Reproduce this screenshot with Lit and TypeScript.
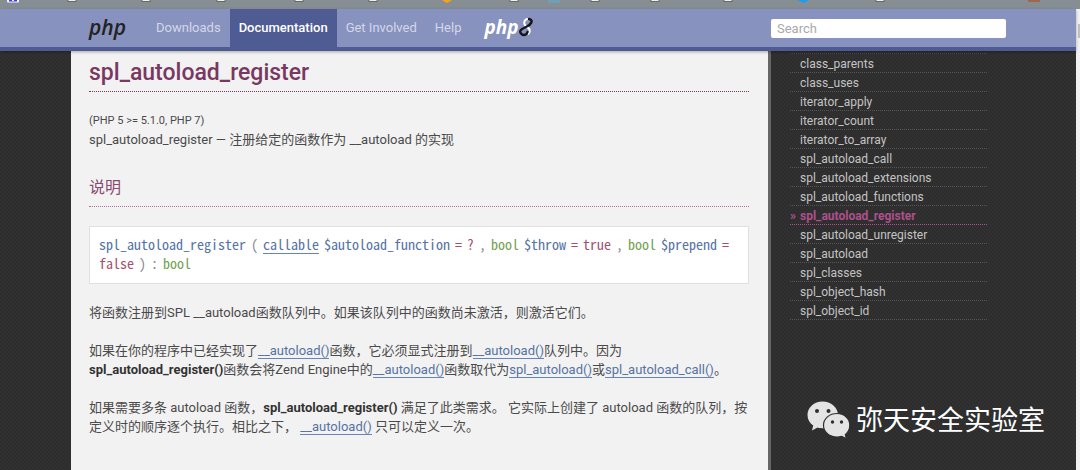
import { LitElement, html, svg, css } from "lit";
import { customElement } from "lit/decorators.js";

const TABS = [
  { left: 72, kind: "page" },
  { left: 146, kind: "page" },
  { left: 221, kind: "page" },
  { left: 299, kind: "page" },
  { left: 373, kind: "page" },
  { left: 447, kind: "orange" },
  { left: 514, kind: "page" },
  { left: 554, kind: "teal" },
  { left: 595, kind: "page" },
  { left: 655, kind: "page" },
  { left: 728, kind: "page" },
  { left: 803, kind: "blue" },
  { left: 880, kind: "page" },
  { left: 1034, kind: "brown" },
];

const FUNCTIONS = [
  "class_parents",
  "class_uses",
  "iterator_apply",
  "iterator_count",
  "iterator_to_array",
  "spl_autoload_call",
  "spl_autoload_extensions",
  "spl_autoload_functions",
  "spl_autoload_register",
  "spl_autoload_unregister",
  "spl_autoload",
  "spl_classes",
  "spl_object_hash",
  "spl_object_id",
];

const CURRENT = "spl_autoload_register";

@customElement("browser-strip")
class BrowserStrip extends LitElement {
  static styles = css`
    :host {
      display: block;
      background: #868e94;
      border-bottom: 1px solid #8a8f9c;
    }
    .icons {
      display: block;
      width: 100%;
      height: 8px;
    }
  `;

  private icon(tab: { left: number; kind: string }) {
    const x = tab.left;
    switch (tab.kind) {
      case "orange":
        return svg`<path d="M${x - 5} 0h10l-3 2-2 1-2-1z" fill="#f5a11a"/>`;
      case "teal":
        return svg`<rect x=${x - 6} y="-2" width="12" height="5" rx="1" fill="#6f9fb4"/>`;
      case "blue":
        return svg`<path d="M${x - 6} 0h12l-5 3z" fill="#1e9cf5"/>`;
      case "brown":
        return svg`<rect x=${x - 6} y="-2" width="12" height="4" fill="#9a6a4a"/>`;
      default:
        return svg`<rect x=${x - 4} y="-3" width="8" height="4.500" fill="#eef0ea" stroke="#666a66"/>`;
    }
  }

  render() {
    return html`<svg class="icons" aria-hidden="true">
      <rect x="7" y="-4" width="12" height="6.500" rx="1" fill="#f4f4ff" />
      <path d="M9 0h3v1h2v-1h3v1.500h-8z" fill="#3a3af0" />
      ${TABS.map((t) => this.icon(t))}
    </svg>`;
  }
}

@customElement("site-nav")
class SiteNav extends LitElement {
  static styles = css`
    :host {
      display: block;
      background: #8892bf;
      border-bottom: 4px solid #4f5b93;
      box-shadow: 0 1px 3px rgba(0, 0, 0, 0.3);
      position: relative;
    }
    .bar {
      display: flex;
      align-items: stretch;
      height: 38px;
      padding-left: 80px;
      padding-right: 70px;
    }
    a {
      display: flex;
      align-items: center;
      padding: 0 9px 2px;
      font-size: 13px;
      line-height: 19px;
      color: #d3d7e9;
      text-decoration: none;
      white-space: nowrap;
    }
    .logo {
      font: italic 600 21px/24px "Open Sans", sans-serif;
      color: #222;
      margin-right: 12px;
    }
    .current {
      background: #4f5b93;
      color: #fff;
      font-weight: 500;
    }
    .eight {
      font: italic 700 19px/24px "Open Sans", sans-serif;
      color: #fff;
      padding-left: 14px;
    }
    .swirl {
      width: 14px;
      height: 20px;
    }
    .search {
      margin-left: auto;
      display: flex;
      align-items: center;
    }
    input {
      width: 235px;
      height: 19px;
      box-sizing: border-box;
      border: 0;
      border-radius: 2px;
      padding: 0 6px;
      background: #fff;
      font: 13px/19px Roboto, sans-serif;
      color: #333;
    }
    input::placeholder {
      color: #a9a9a9;
      opacity: 1;
    }
  `;

  render() {
    return html`<nav class="bar">
      <a class="logo" href="#">php</a>
      <a href="#">Downloads</a>
      <a class="current" href="#" aria-current="page">Documentation</a>
      <a href="#">Get Involved</a>
      <a href="#">Help</a>
      <a class="eight" href="#" aria-label="php 8"
        >php<svg class="swirl" viewBox="0 0 14 20" fill="none" stroke-linecap="round">
          <path d="M7 9C4 7 5 2 9 2" stroke="#fff" stroke-width="2" />
          <path d="M8 10C12 12 11 16 9 17" stroke="#fff" stroke-width="2" />
          <path d="M10 2C15 3 12 8 7 10C2 12 0 14 2 16.500C4 19 8 18 8.500 15" stroke="#151515" stroke-width="2.400" />
        </svg>
      </a>
      <form class="search" role="search">
        <input type="search" placeholder="Search" aria-label="Search" />
      </form>
    </nav>`;
  }
}

@customElement("doc-article")
class DocArticle extends LitElement {
  static styles = css`
    :host {
      display: block;
      background: #f2f2f2;
      padding: 8px 19px 32px 18px;
      font-size: 13px;
      line-height: 19px;
      color: #4a4a4a;
    }
    h1,
    h2,
    p {
      margin: 0;
    }
    h1 {
      font-size: 23px;
      line-height: 28px;
      font-weight: 500;
      color: #793862;
      padding-bottom: 4px;
      border-bottom: 1px dotted #793862;
    }
    .version {
      margin-top: 19px;
      font-size: 11px;
    }
    h2 {
      margin-top: 28px;
      font-size: 16px;
      line-height: 22px;
      font-weight: 400;
      color: #864a71;
      padding-bottom: 7px;
      border-bottom: 1px dotted #b06f98;
    }
    .synopsis {
      display: flex;
      flex-wrap: wrap;
      column-gap: 5px;
      margin: 19px 0;
      padding: 8px 9px 10px;
      background: #fff;
      border: 1px solid #e0e0e0;
      font: 14px/19px "Noto Sans Mono CJK SC", "Liberation Mono", monospace;
      color: #888;
    }
    .synopsis a {
      line-height: 18px;
    }
    .name,
    .var {
      color: #5573a3;
    }
    .type {
      color: #74a153;
    }
    .value {
      color: #a34f72;
    }
    p + p,
    .first {
      margin-top: 19px;
    }
    strong {
      font-weight: 700;
      color: #333;
    }
    a {
      color: #5573a3;
      text-decoration: none;
      border-bottom: 1px solid #6485b5;
    }
  `;

  render() {
    const auto = html`<a href="#">__autoload()</a>`;
    return html`
      <h1>spl_autoload_register</h1>
      <div class="version">(PHP 5 &gt;= 5.1.0, PHP 7)</div>
      <div>spl_autoload_register — 注册给定的函数作为 __autoload 的实现</div>
      <h2>说明</h2>
      <div class="synopsis">
        <span class="name">spl_autoload_register</span><span>(</span>
        <a href="#">callable</a><span class="var">$autoload_function</span>
        <span class="value">=</span><span class="value">?</span><span>,</span>
        <span class="type">bool</span><span class="var">$throw</span>
        <span class="value">=</span><span class="value">true</span><span>,</span>
        <span class="type">bool</span><span class="var">$prepend</span>
        <span class="value">=</span><span class="value">false</span><span>)</span
        ><span>:</span><span class="type">bool</span>
      </div>
      <p class="first">将函数注册到SPL __autoload函数队列中。如果该队列中的函数尚未激活，则激活它们。</p>
      <p>
        如果在你的程序中已经实现了${auto}函数，它必须显式注册到${auto}队列中。因为<br />
        <strong>spl_autoload_register()</strong>函数会将Zend Engine中的${auto}函数取代为<a href="#">spl_autoload()</a>或<a href="#">spl_autoload_call()</a>。
      </p>
      <p>
        如果需要多条 autoload 函数，<strong>spl_autoload_register()</strong> 满足了此类需求。
        它实际上创建了 autoload 函数的队列，按定义时的顺序逐个执行。相比之下， ${auto} 只可以定义一次。
      </p>
    `;
  }
}

@customElement("function-list")
class FunctionList extends LitElement {
  static styles = css`
    :host {
      display: block;
      padding: 2px 89px 24px 19px;
    }
    ul {
      list-style: none;
      margin: 0;
      padding: 0;
      border-top: 1px dotted #4a4a4a;
    }
    a {
      display: flex;
      height: 18px;
      padding-left: 10px;
      border-bottom: 1px dotted #555;
      font-size: 12px;
      line-height: 20px;
      color: #c4c4c4;
      text-decoration: none;
    }
    .current {
      padding-left: 0;
      font-weight: 700;
      color: #ae508d;
      border-color: #ae508d;
    }
    .mark {
      width: 10px;
    }
  `;

  render() {
    return html`<ul>
      ${FUNCTIONS.map((name) =>
        name === CURRENT
          ? html`<li><a class="current" href="#" aria-current="page"><span class="mark">»</span>${name}</a></li>`
          : html`<li><a href="#">${name}</a></li>`
      )}
    </ul>`;
  }
}

@customElement("app-root")
class AppRoot extends LitElement {
  static styles = css`
    :host {
      display: flex;
      flex-direction: column;
      min-height: 100vh;
      font-family: Roboto, "Noto Sans CJK SC", sans-serif;
      background: #2f2f2f;
    }
    .page {
      flex: 1;
      display: grid;
      grid-template-columns: minmax(0, 1fr) 4px;
    }
    .scroll {
      background: #f1f1f1;
      padding-top: 15px;
    }
    .thumb {
      height: 14px;
      margin-left: 2px;
      background: #c1c1c1;
    }
    .view {
      display: flex;
      flex-direction: column;
    }
    .columns {
      flex: 1;
      display: grid;
      grid-template-columns: minmax(0, 1fr) 308px;
      padding-left: 71px;
      background: repeating-conic-gradient(#2d2d2d 0 25%, #313131 0 50%) 0 0 / 4px 4px;
    }
    .side {
      border-left: 3px solid #666;
      display: flex;
      flex-direction: column;
      justify-content: space-between;
    }
    .brand {
      display: flex;
      align-items: flex-start;
      gap: 6px;
      padding: 0 0 29px 36px;
      font-size: 27px;
      line-height: 40px;
      color: #fff;
      white-space: nowrap;
    }
    .bubbles {
      width: 43px;
      height: 38px;
    }
  `;

  render() {
    return html`
      <browser-strip></browser-strip>
      <div class="page">
        <div class="view">
          <site-nav></site-nav>
          <div class="columns">
            <doc-article></doc-article>
            <aside class="side">
              <function-list></function-list>
              <div class="brand">
                <svg class="bubbles" viewBox="0 0 43 38" aria-hidden="true">
                  <path
                    d="M15.500 0.500C7 0.500 0.500 6.500 0.500 14c0 4.500 2.200 8 5.700 10.500L5 29.500l5.500-3c2 .6 4 .9 6.500.9 7 0 14-6 14-13.400S24 0.500 15.500 0.500z"
                    fill="#e4e4e4"
                  />
                  <path
                    d="M30 12.500c-7.500 0-13.500 5-13.500 11.800S22.500 36 30 36c1.700 0 3.300-.2 4.800-.7l4.700 2.500-1.200-4.200c2.800-2.200 4.500-5.400 4.500-9.300 0-6.800-5.800-11.800-12.800-11.800z"
                    fill="#e4e4e4"
                    stroke="#2f2f2f"
                    stroke-width="1.200"
                  />
                  <g fill="#2f2f2f">
                    <circle cx="10" cy="10" r="2" />
                    <circle cx="21.500" cy="10" r="2" />
                    <circle cx="25.500" cy="21" r="1.700" />
                    <circle cx="34.500" cy="21" r="1.700" />
                  </g>
                </svg>
                <span>弥天安全实验室</span>
              </div>
            </aside>
          </div>
        </div>
        <div class="scroll"><div class="thumb"></div></div>
      </div>
    `;
  }
}
